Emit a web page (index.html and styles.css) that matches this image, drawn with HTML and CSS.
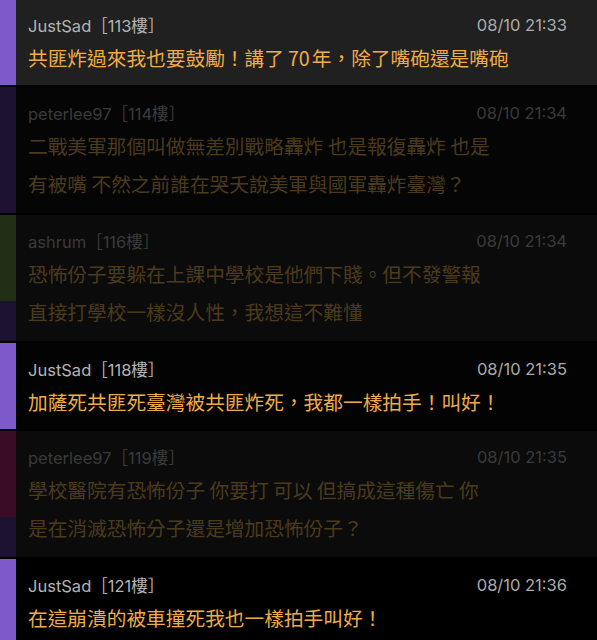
FILE: index.html
```html
<!DOCTYPE html>
<html lang="zh-Hant">
<head>
<meta charset="utf-8">
<title>留言</title>
<link rel="stylesheet" href="styles.css">
</head>
<body>
<div class="list">
  <div class="row row--cut row--grey">
    <div class="bar"><div class="bar-top bar--purple"></div><div class="bar-rest bar--purple"></div></div>
    <div class="body">
      <div class="meta"><span class="who">JustSad［113樓］</span><span class="time">08/10 21:33</span></div>
      <div class="text"><span class="line">共匪炸過來我也要鼓勵！講了<span class="num">70</span>年，除了嘴砲還是嘴砲</span></div>
    </div>
  </div>
  <div class="row row--dim row--two row--b1">
    <div class="bar"><div class="bar-top bar--dimpurple"></div><div class="bar-rest"></div></div>
    <div class="body">
      <div class="meta"><span class="who">peterlee97［114樓］</span><span class="time">08/10 21:34</span></div>
      <div class="text"><span class="line">二戰美軍那個叫做無差別戰略轟炸 也是報復轟炸 也是</span><span class="line">有被嘴 不然之前誰在哭夭說美軍與國軍轟炸臺灣？</span></div>
    </div>
  </div>
  <div class="row row--dim row--two row--b2">
    <div class="bar"><div class="bar-top bar--green"></div><div class="bar-rest"></div></div>
    <div class="body">
      <div class="meta"><span class="who">ashrum［116樓］</span><span class="time">08/10 21:34</span></div>
      <div class="text"><span class="line">恐怖份子要躲在上課中學校是他們下賤。但不發警報</span><span class="line">直接打學校一樣沒人性，我想這不難懂</span></div>
    </div>
  </div>
  <div class="row row--b3">
    <div class="bar"><div class="bar-top bar--purple"></div><div class="bar-rest bar--purple"></div></div>
    <div class="body">
      <div class="meta"><span class="who">JustSad［118樓］</span><span class="time">08/10 21:35</span></div>
      <div class="text"><span class="line">加薩死共匪死臺灣被共匪炸死，我都一樣拍手！叫好！</span></div>
    </div>
  </div>
  <div class="row row--dim row--two row--b2">
    <div class="bar"><div class="bar-top bar--red"></div><div class="bar-rest"></div></div>
    <div class="body">
      <div class="meta"><span class="who">peterlee97［119樓］</span><span class="time">08/10 21:35</span></div>
      <div class="text"><span class="line">學校醫院有恐怖份子 你要打 可以 但搞成這種傷亡 你</span><span class="line">是在消滅恐怖分子還是增加恐怖份子？</span></div>
    </div>
  </div>
  <div class="row row--b4">
    <div class="bar"><div class="bar-top bar--purple"></div><div class="bar-rest bar--purple"></div></div>
    <div class="body">
      <div class="meta"><span class="who">JustSad［121樓］</span><span class="time">08/10 21:36</span></div>
      <div class="text"><span class="line">在這崩潰的被車撞死我也一樣拍手叫好！</span></div>
    </div>
  </div>
</div>
</body>
</html>
```
FILE: styles.css
```css
html, body {
  margin: 0;
  padding: 0;
  background: #000;
}
body {
  font-family: "Inter", "Noto Sans CJK TC", sans-serif;
  width: 597px;
  height: 640px;
  overflow: hidden;
}
.list {
  display: flex;
  flex-direction: column;
}
.row {
  display: grid;
  grid-template-columns: 16px 1fr;
  border-top: 2px solid #000;
}
.row--cut { border-top: 0; }
.row--grey { background: #202020; }
.row--b1 { background: #050505; }
.row--b2 { background: #0b0b0b; }
.row--b3 { background: #030303; }
.row--b4 { background: #000; }

.bar {
  display: flex;
  flex-direction: column;
}
.bar-top { height: 86px; }
.row--cut .bar-top { height: 0; }
.bar-rest { flex: 1; background: #1d1330; }
.bar--purple { background: #7e59c9; }
.bar--dimpurple { background: #1d1330; }
.bar--green { background: #232e17; }
.bar--red { background: #3b0d24; }

.body {
  padding: 12px 30px 8px 12px;
}
.row--cut .body { padding-top: 11px; }
.row--two .body { padding-bottom: 10px; }
.meta {
  display: flex;
  justify-content: space-between;
  align-items: center;
  height: 28px;
  font-size: 16.5px;
  color: #b3b3b3;
}
.time {
  font-size: 16.5px;
  color: #ababab;
}
.text {
  font-family: "Noto Sans CJK TC", sans-serif;
  font-size: 19.7px;
  line-height: 38px;
  color: #efac47;
}
.num {
  margin: 0 2px 0 4px;
}
.line {
  display: block;
  white-space: nowrap;
}
.row--dim .meta,
.row--dim .time { color: #3a3a3a; }
.row--dim .text { color: #4b3b1c; }
```
